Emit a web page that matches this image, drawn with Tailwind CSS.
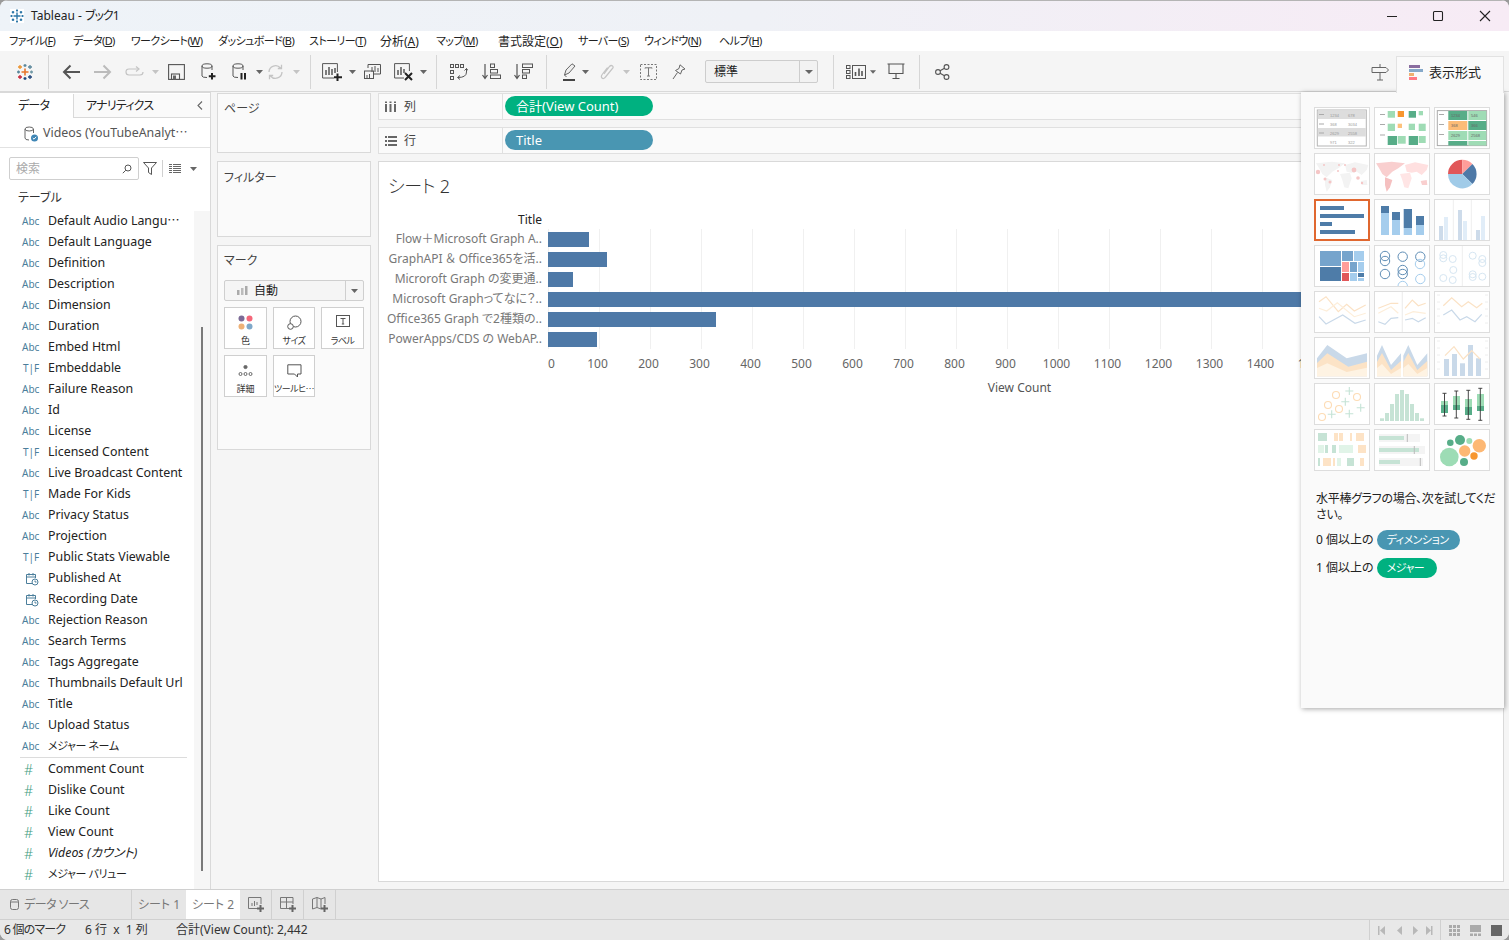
<!DOCTYPE html>
<html lang="ja">
<head>
  <meta charset="UTF-8" />
  <title>Tableau - ブック1</title>
  <script src="https://cdn.jsdelivr.net/npm/@tailwindcss/browser@4"></script>
</head>
<body class="bg-[#9a9a9a] overflow-hidden">
<div class="relative flex flex-col w-[1509px] h-[940px] overflow-hidden rounded-lg bg-[#f5f5f5] text-[#333] font-['Noto_Sans','Noto_Sans_CJK_JP',sans-serif] text-[12px] [font-feature-settings:'palt']">

  <!-- title bar -->
  <div class="flex items-center h-[31px] shrink-0 border-t border-[#b4b4b4] bg-linear-to-r from-[#eef3f8] via-[#eff1f6] to-[#f7ebf5]">
    <svg class="ml-[10px] w-[14px] h-[14px]" viewBox="0 0 14 14" stroke="#2f78a8" stroke-width="1.4"><rect width="14" height="14" fill="#fff" stroke="none"/><path d="M7 3.5V10.5M3.5 7H10.5M7 .5V2.5M6 1.5H8M7 11.5V13.5M6 12.5H8M.5 7H2.5M1.5 6V8M11.5 7H13.5M12.5 6V8M3 2V4.5M1.8 3.2H4.2M11 2V4.5M9.8 3.2H12.2M3 9.5V12M1.8 10.8H4.2M11 9.5V12M9.8 10.8H12.2"/></svg>
    <span class="ml-[7px] text-[#222]">Tableau - <span class="tracking-[-1px]">ブック1</span></span>
    <div class="ml-auto flex items-center">
      <svg class="w-[12px] h-[12px] mr-[34px]" viewBox="0 0 12 12" stroke="#222"><path d="M1 6.5H11"/></svg>
      <svg class="w-[12px] h-[12px] mr-[35px]" viewBox="0 0 12 12" fill="none" stroke="#222" stroke-width="1.1"><rect x="1.5" y="1.5" width="9" height="9" rx="1"/></svg>
      <svg class="w-[12px] h-[12px] mr-[18px]" viewBox="0 0 12 12" stroke="#222" stroke-width="1.1"><path d="M1 1L11 11M11 1L1 11"/></svg>
    </div>
  </div>

  <!-- menu -->
  <div class="flex items-center h-[20px] shrink-0 bg-white pl-[9px] pt-[1px] text-[11px] tracking-[-0.6px] text-[#222] whitespace-nowrap">
    <span class="w-[64px]">ファイル(<u>F</u>)</span><span class="w-[58px]">データ(<u>D</u>)</span><span class="w-[87px]">ワークシート(<u>W</u>)</span><span class="w-[91px]">ダッシュボード(<u>B</u>)</span><span class="w-[71px]">ストーリー(<u>T</u>)</span><span class="w-[56px] text-[12px] tracking-normal">分析(<u>A</u>)</span><span class="w-[62px]">マップ(<u>M</u>)</span><span class="w-[80px] text-[12px] tracking-normal">書式設定(<u>O</u>)</span><span class="w-[66px]">サーバー(<u>S</u>)</span><span class="w-[75px]">ウィンドウ(<u>N</u>)</span><span>ヘルプ(<u>H</u>)</span>
  </div>

  <!-- toolbar -->
  <div class="flex items-center h-[41px] shrink-0 pt-[1px] bg-[#f5f5f5] border-b border-[#d9d9d9]">
    <svg class="ml-[16px] w-[18px] h-[18px]" viewBox="0 0 18 18" fill="none" stroke-width="1.3"><path d="M9 5.5V12.5M5.5 9H12.5" stroke="#e8762c" stroke-width="1.6"/><path d="M9 1V4M7.5 2.5H10.5" stroke="#5b879b"/><path d="M9 14V17M7.5 15.5H10.5" stroke="#1f447a"/><path d="M1 9H4M2.5 7.5V10.5" stroke="#59879b"/><path d="M14 9H17M15.5 7.5V10.5" stroke="#7199a6"/><path d="M4 2V6M2 4H6" stroke="#eb912b"/><path d="M14 2V6M12 4H16" stroke="#5b879b"/><path d="M4 12V16M2 14H6" stroke="#c72035"/><path d="M14 12V16M12 14H16" stroke="#1f447a"/></svg>
    <div class="ml-[14px] w-px h-[34px] bg-[#d6d6d6]"></div>
    <svg class="ml-[13px] w-[18px] h-[16px]" viewBox="0 0 18 16" fill="none" stroke="#555" stroke-width="2"><path d="M18 8H2M8.5 1.5L2 8L8.5 14.5"/></svg>
    <svg class="ml-[14px] w-[18px] h-[16px]" viewBox="0 0 18 16" fill="none" stroke="#bbb" stroke-width="2"><path d="M0 8H16M9.5 1.5L16 8L9.5 14.5"/></svg>
    <svg class="ml-[13px] w-[19px] h-[12px]" viewBox="0 0 19 12" fill="none" stroke="#c4c4c4" stroke-width="1.2"><path d="M13 3H4Q1 3 1 6T4 9H15Q18 9 18 6"/><path d="M11 .5L14 3L11 5.5"/></svg>
    <svg class="ml-[8px] w-[7px] h-[4px]" viewBox="0 0 7 4" fill="#c4c4c4"><path d="M0 0H7L3.5 4Z"/></svg>
    <svg class="ml-[9px] w-[17px] h-[16px]" viewBox="0 0 17 16" fill="none" stroke="#555" stroke-width="1.1"><rect x=".6" y=".6" width="15.8" height="14.8"/><rect x="3.5" y="10" width="8" height="5.5"/><rect x="5" y="11.5" width="3" height="4" fill="#666" stroke="none"/></svg>
    <svg class="ml-[16px] w-[15px] h-[17px]" viewBox="0 0 15 17" fill="none" stroke="#555"><path d="M1 3V13Q1 14.5 6 14.5M11 3V7"/><ellipse cx="6" cy="3" rx="5" ry="2.2"/><path d="M11 10V16.5M7.8 13.2H14.5" stroke="#222" stroke-width="2"/></svg>
    <svg class="ml-[16px] w-[15px] h-[17px]" viewBox="0 0 15 17" fill="none" stroke="#555"><path d="M1 3V13Q1 14.5 6 14.5M11 3V7"/><ellipse cx="6" cy="3" rx="5" ry="2.2"/><path d="M9.5 10V16.5M13 10V16.5" stroke="#222" stroke-width="2"/></svg>
    <svg class="ml-[9px] w-[7px] h-[4px]" viewBox="0 0 7 4" fill="#666"><path d="M0 0H7L3.5 4Z"/></svg>
    <svg class="ml-[4px] w-[17px] h-[16px]" viewBox="0 0 17 16" fill="none" stroke="#c4c4c4" stroke-width="1.3"><path d="M2 8A6.5 6.5 0 0 1 13.5 4M15 8A6.5 6.5 0 0 1 3.5 12M14.5 .8V4.5H10.8M2.5 15.2V11.5H6.2"/></svg>
    <svg class="ml-[9px] w-[7px] h-[4px]" viewBox="0 0 7 4" fill="#c4c4c4"><path d="M0 0H7L3.5 4Z"/></svg>
    <div class="ml-[10px] w-px h-[34px] bg-[#d6d6d6]"></div>
    <svg class="ml-[11px] w-[20px] h-[18px]" viewBox="0 0 20 18" fill="none" stroke="#555"><path d="M12 15H.6V.6H15.4V9"/><path d="M4 12V7M7 12V4M10 12V6M13 10V5" stroke-width="1.5"/><path d="M15.5 10.5V18M12 14.3H20" stroke="#222" stroke-width="2"/></svg>
    <svg class="ml-[7px] w-[7px] h-[4px]" viewBox="0 0 7 4" fill="#666"><path d="M0 0H7L3.5 4Z"/></svg>
    <svg class="ml-[8px] w-[17px] h-[15px]" viewBox="0 0 17 15" fill="none" stroke="#555"><path d="M4 4V.5H16.5V10H10"/><rect x=".5" y="7" width="9" height="7.5" fill="#f5f5f5"/><path d="M8 8V3M11 8V2M14 8V4M3 14V11M5.5 14V10" /></svg>
    <svg class="ml-[13px] w-[19px] h-[18px]" viewBox="0 0 19 18" fill="none" stroke="#555"><path d="M10 15H.6V.6H15.4V8"/><path d="M4 12V7M7 12V4M10 10V6" stroke-width="1.5"/><path d="M11 10L18 17M18 10L11 17" stroke="#222" stroke-width="2"/></svg>
    <svg class="ml-[7px] w-[7px] h-[4px]" viewBox="0 0 7 4" fill="#666"><path d="M0 0H7L3.5 4Z"/></svg>
    <div class="ml-[9px] w-px h-[34px] bg-[#d6d6d6]"></div>
    <svg class="ml-[13px] w-[18px] h-[16px]" viewBox="0 0 18 16" fill="none" stroke="#555"><rect x=".5" y=".5" width="3" height="3"/><rect x="5.5" y=".5" width="3" height="3"/><rect x="10.5" y=".5" width="3" height="3"/><rect x=".5" y="6.5" width="3" height="3"/><rect x=".5" y="12.5" width="3" height="3"/><path d="M16.5 4.5V8Q16.5 13.5 8 13.5M14.5 6.5L16.5 4.5L18 6.5M10 11.5L7.5 13.5L10 15.5"/></svg>
    <svg class="ml-[14px] w-[19px] h-[17px]" viewBox="0 0 19 17" fill="none" stroke="#555"><path d="M3 1V15M.5 12L3 15.5L5.5 12" stroke-width="1.2"/><rect x="8.5" y="1" width="4" height="3.5"/><rect x="8.5" y="6.5" width="7" height="3.5"/><rect x="8.5" y="12" width="10" height="3.5"/></svg>
    <svg class="ml-[13px] w-[19px] h-[17px]" viewBox="0 0 19 17" fill="none" stroke="#555"><path d="M3 1V15M.5 12L3 15.5L5.5 12" stroke-width="1.2"/><rect x="8.5" y="1" width="10" height="3.5"/><rect x="8.5" y="6.5" width="7" height="3.5"/><rect x="8.5" y="12" width="4" height="3.5"/></svg>
    <div class="ml-[13px] w-px h-[34px] bg-[#d6d6d6]"></div>
    <svg class="ml-[16px] w-[13px] h-[18px]" viewBox="0 0 13 18" fill="none" stroke="#666"><path d="M1.5 12L3 7L9 .8L12 3L6 10Z" fill="#eee"/><path d="M1.5 12L3.5 14"/><path d="M0 17H12" stroke="#444" stroke-width="2"/></svg>
    <svg class="ml-[6px] w-[7px] h-[4px]" viewBox="0 0 7 4" fill="#666"><path d="M0 0H7L3.5 4Z"/></svg>
    <svg class="ml-[11px] w-[14px] h-[16px]" viewBox="0 0 14 16" fill="none" stroke="#c4c4c4" stroke-width="1.2"><path d="M4 10L9.5 2.5Q11 .8 12.5 2T12 5L5.5 13Q3.5 15.5 2 14T2.5 10L7.5 3.5"/></svg>
    <svg class="ml-[9px] w-[7px] h-[4px]" viewBox="0 0 7 4" fill="#c4c4c4"><path d="M0 0H7L3.5 4Z"/></svg>
    <svg class="ml-[10px] w-[17px] h-[16px]" viewBox="0 0 17 16" fill="none" stroke="#777"><rect x=".5" y=".5" width="16" height="15" stroke-dasharray="2 1.5"/><path d="M5 4.5V3.8H12V4.5M8.5 3.8V12M7 12H10" /></svg>
    <svg class="ml-[15px] w-[14px] h-[16px]" viewBox="0 0 14 16" fill="none" stroke="#666"><path d="M8 .8L13 5L10 6L8.5 10L3.5 6.5L7 4.5Z"/><path d="M5.5 8.5L1 15"/></svg>
    <div class="ml-[19px] flex items-center w-[113px] h-[23px] rounded-[2px] border border-[#cdcdcd] bg-[#f2f2f2]">
      <span class="flex-1 pl-[8px] text-[#222]">標準</span>
      <span class="flex items-center justify-center w-[18px] h-[21px] border-l border-[#cdcdcd]">
        <svg class="w-[8px] h-[4px]" viewBox="0 0 8 4" fill="#666"><path d="M0 0H8L4 4Z"/></svg>
      </span>
    </div>
    <div class="ml-[15px] w-px h-[34px] bg-[#d6d6d6]"></div>
    <svg class="ml-[12px] w-[20px] h-[14px]" viewBox="0 0 20 14" fill="none" stroke="#555"><rect x=".5" y=".5" width="3.5" height="3"/><rect x=".5" y="5.5" width="3.5" height="3"/><rect x=".5" y="10.5" width="3.5" height="3"/><rect x="6.5" y=".5" width="13" height="13"/><path d="M9.5 11V7M13 11V3.5M16 11V6" stroke-width="1.6"/></svg>
    <svg class="ml-[4px] w-[6px] h-[4px]" viewBox="0 0 7 4" fill="#666"><path d="M0 0H7L3.5 4Z"/></svg>
    <svg class="ml-[11px] w-[18px] h-[17px]" viewBox="0 0 18 17" fill="none" stroke="#555" stroke-width="1.1"><path d="M.5 1H17.5M2 1V10.5H16V1M9 10.5V15.5M5.5 15.5H12.5"/></svg>
    <div class="ml-[14px] w-px h-[34px] bg-[#d6d6d6]"></div>
    <svg class="ml-[15px] w-[15px] h-[16px]" viewBox="0 0 15 16" fill="none" stroke="#555" stroke-width="1.1"><circle cx="3" cy="8" r="2.4"/><circle cx="11.5" cy="3" r="2.4"/><circle cx="11.5" cy="13" r="2.4"/><path d="M5 6.8L9.5 4.2M5 9.2L9.5 11.8"/></svg>
    <svg class="ml-[421px] w-[18px] h-[18px]" viewBox="0 0 18 18" fill="none" stroke="#666"><path d="M1 4.5H15L17.5 7L15 9.5H1ZM9 1V4.5M9 9.5V17M6 17H12"/></svg>
  </div>

  <!-- main -->
  <div class="flex flex-1 min-h-0">

    <!-- data pane -->
    <div class="flex flex-col w-[211px] shrink-0 bg-white border-r border-[#d9d9d9] overflow-hidden">
      <div class="flex h-[26px] shrink-0 border-t border-[#d9d9d9] pt-[1px]">
        <div class="flex items-center w-[73px] pl-[18px] text-[12px] tracking-[-0.8px] text-[#222]">データ</div>
        <div class="flex flex-1 items-center justify-between px-[7px] pl-[12px] text-[12px] tracking-[-0.8px] text-[#222] bg-[#fafafa] border-l border-b border-[#d9d9d9]">
          アナリティクス
          <svg class="w-[6px] h-[9px]" viewBox="0 0 6 9" fill="none" stroke="#666" stroke-width="1.1"><path d="M5 .5L1 4.5L5 8.5"/></svg>
        </div>
      </div>
      <div class="flex items-center h-[30px] shrink-0 pl-[24px] pt-[2px] text-[#555] text-[12.4px] border-b border-[#e2e2e2]">
        <svg class="w-[14px] h-[16px] shrink-0" viewBox="0 0 14 16" fill="none" stroke="#666"><path d="M1 3V12Q1 14 5 14M9.5 3V7"/><ellipse cx="5.2" cy="3" rx="4.2" ry="2"/><circle cx="10.5" cy="12" r="3.5" fill="#3f86b5" stroke="none"/><path d="M8.8 12L10 13.2L12.2 10.8" stroke="#fff"/></svg>
        <span class="ml-[5px] whitespace-nowrap">Videos (YouTubeAnalyt⋯</span>
      </div>
      <div class="flex items-center h-[38px] shrink-0 pl-[9px] pt-[3px]">
        <div class="flex items-center justify-between w-[130px] h-[23px] px-[6px] rounded-[2px] border border-[#cfcfcf] text-[#aaa]">
          検索
          <svg class="w-[10px] h-[10px]" viewBox="0 0 10 10" fill="none" stroke="#555"><circle cx="6" cy="4" r="3"/><path d="M3.8 6.2L.8 9.2"/></svg>
        </div>
        <svg class="ml-[4px] w-[14px] h-[13px]" viewBox="0 0 14 13" fill="none" stroke="#555"><path d="M.5 .5H13.5L8.5 6V12.5L5.5 10.5V6Z"/></svg>
        <div class="ml-[5px] w-px h-[17px] bg-[#d0d0d0]"></div>
        <svg class="ml-[6px] w-[12px] h-[9px]" viewBox="0 0 12 9" stroke="#666"><path d="M0 .5H3M4 .5H12M0 2.5H3M4 2.5H12M0 4.5H3M4 4.5H12M0 6.5H3M4 6.5H12M0 8.5H3M4 8.5H12"/></svg>
        <svg class="ml-[9px] w-[7px] h-[4px]" viewBox="0 0 7 4" fill="#666"><path d="M0 0H7L3.5 4Z"/></svg>
      </div>
      <div class="flex items-center h-[25px] shrink-0 pb-[1px] pl-[18px] text-[12px] text-[#333]">テーブル</div>

      <div class="flex flex-1 min-h-0">
        <div class="w-[194px] shrink-0 text-[12.4px] text-[#222] whitespace-nowrap">
          <div class="flex items-center h-[21px]"><span class="w-[48px] pl-[22px] text-[10px] text-[#4b7e9b]">Abc</span>Default Audio Langu⋯</div>
          <div class="flex items-center h-[21px]"><span class="w-[48px] pl-[22px] text-[10px] text-[#4b7e9b]">Abc</span>Default Language</div>
          <div class="flex items-center h-[21px]"><span class="w-[48px] pl-[22px] text-[10px] text-[#4b7e9b]">Abc</span>Definition</div>
          <div class="flex items-center h-[21px]"><span class="w-[48px] pl-[22px] text-[10px] text-[#4b7e9b]">Abc</span>Description</div>
          <div class="flex items-center h-[21px]"><span class="w-[48px] pl-[22px] text-[10px] text-[#4b7e9b]">Abc</span>Dimension</div>
          <div class="flex items-center h-[21px]"><span class="w-[48px] pl-[22px] text-[10px] text-[#4b7e9b]">Abc</span>Duration</div>
          <div class="flex items-center h-[21px]"><span class="w-[48px] pl-[22px] text-[10px] text-[#4b7e9b]">Abc</span>Embed Html</div>
          <div class="flex items-center h-[21px]"><span class="w-[48px] pl-[23px] text-[10px] text-[#4b7e9b]">T|F</span>Embeddable</div>
          <div class="flex items-center h-[21px]"><span class="w-[48px] pl-[22px] text-[10px] text-[#4b7e9b]">Abc</span>Failure Reason</div>
          <div class="flex items-center h-[21px]"><span class="w-[48px] pl-[22px] text-[10px] text-[#4b7e9b]">Abc</span>Id</div>
          <div class="flex items-center h-[21px]"><span class="w-[48px] pl-[22px] text-[10px] text-[#4b7e9b]">Abc</span>License</div>
          <div class="flex items-center h-[21px]"><span class="w-[48px] pl-[23px] text-[10px] text-[#4b7e9b]">T|F</span>Licensed Content</div>
          <div class="flex items-center h-[21px]"><span class="w-[48px] pl-[22px] text-[10px] text-[#4b7e9b]">Abc</span>Live Broadcast Content</div>
          <div class="flex items-center h-[21px]"><span class="w-[48px] pl-[23px] text-[10px] text-[#4b7e9b]">T|F</span>Made For Kids</div>
          <div class="flex items-center h-[21px]"><span class="w-[48px] pl-[22px] text-[10px] text-[#4b7e9b]">Abc</span>Privacy Status</div>
          <div class="flex items-center h-[21px]"><span class="w-[48px] pl-[22px] text-[10px] text-[#4b7e9b]">Abc</span>Projection</div>
          <div class="flex items-center h-[21px]"><span class="w-[48px] pl-[23px] text-[10px] text-[#4b7e9b]">T|F</span>Public Stats Viewable</div>
          <div class="flex items-center h-[21px]"><span class="w-[48px] pl-[25px]"><svg class="w-[14px] h-[14px]" viewBox="0 0 14 14" fill="none" stroke="#4b7e9b"><path d="M7 11.5H1.5V2.5H10.5V6M1.5 5H10.5M4 1V3.5M8 1V3.5"/><circle cx="10" cy="10" r="3"/><path d="M10 8.5V10H11.5"/></svg></span>Published At</div>
          <div class="flex items-center h-[21px]"><span class="w-[48px] pl-[25px]"><svg class="w-[14px] h-[14px]" viewBox="0 0 14 14" fill="none" stroke="#4b7e9b"><path d="M7 11.5H1.5V2.5H10.5V6M1.5 5H10.5M4 1V3.5M8 1V3.5"/><circle cx="10" cy="10" r="3"/><path d="M10 8.5V10H11.5"/></svg></span>Recording Date</div>
          <div class="flex items-center h-[21px]"><span class="w-[48px] pl-[22px] text-[10px] text-[#4b7e9b]">Abc</span>Rejection Reason</div>
          <div class="flex items-center h-[21px]"><span class="w-[48px] pl-[22px] text-[10px] text-[#4b7e9b]">Abc</span>Search Terms</div>
          <div class="flex items-center h-[21px]"><span class="w-[48px] pl-[22px] text-[10px] text-[#4b7e9b]">Abc</span>Tags Aggregate</div>
          <div class="flex items-center h-[21px]"><span class="w-[48px] pl-[22px] text-[10px] text-[#4b7e9b]">Abc</span>Thumbnails Default Url</div>
          <div class="flex items-center h-[21px]"><span class="w-[48px] pl-[22px] text-[10px] text-[#4b7e9b]">Abc</span>Title</div>
          <div class="flex items-center h-[21px]"><span class="w-[48px] pl-[22px] text-[10px] text-[#4b7e9b]">Abc</span>Upload Status</div>
          <div class="flex items-center h-[21px] text-[11px] tracking-[-0.4px]"><span class="w-[48px] pl-[22px] text-[10px] tracking-normal text-[#4b7e9b]">Abc</span>メジャー ネーム</div>
          <div class="h-[2px] ml-[20px] mr-[7px] border-t border-[#dcdcdc]"></div>
          <div class="flex items-center h-[21px]"><span class="w-[48px] pl-[24px] text-[14px] font-light leading-none text-[#3f9d7f]">#</span>Comment Count</div>
          <div class="flex items-center h-[21px]"><span class="w-[48px] pl-[24px] text-[14px] font-light leading-none text-[#3f9d7f]">#</span>Dislike Count</div>
          <div class="flex items-center h-[21px]"><span class="w-[48px] pl-[24px] text-[14px] font-light leading-none text-[#3f9d7f]">#</span>Like Count</div>
          <div class="flex items-center h-[21px]"><span class="w-[48px] pl-[24px] text-[14px] font-light leading-none text-[#3f9d7f]">#</span>View Count</div>
          <div class="flex items-center h-[21px] italic"><span class="w-[48px] pl-[24px] text-[14px] font-light leading-none not-italic text-[#3f9d7f]">#</span>Videos (カウント)</div>
          <div class="flex items-center h-[21px] text-[11px] tracking-[-0.4px]"><span class="w-[48px] pl-[24px] text-[14px] font-light leading-none tracking-normal text-[#3f9d7f]">#</span>メジャー バリュー</div>
        </div>
        <!-- scrollbar -->
        <div class="flex-1 pt-[116px] pb-[18px] pl-[7px] bg-[#f6f6f6]">
          <div class="w-[2px] h-full bg-[#7a7a7a]"></div>
        </div>
      </div>
    </div>

    <!-- shelves column -->
    <div class="flex flex-col w-[154px] shrink-0 ml-[6px] pt-[1px]">
      <div class="h-[60px] shrink-0 pl-[6px] pt-[6px] bg-[#fafafa] border border-[#d9d9d9] text-[#444]">ページ</div>
      <div class="h-[76px] shrink-0 mt-[8px] pl-[6px] pt-[7px] bg-[#fafafa] border border-[#d9d9d9] text-[#444]">フィルター</div>
      <div class="h-[205px] shrink-0 mt-[8px] px-[6px] pt-[6px] bg-[#fafafa] border border-[#d9d9d9] text-[#444]">
        マーク
        <div class="flex items-center h-[21px] mt-[10px] w-[140px] rounded-[2px] border border-[#cfcfcf] bg-[#f5f5f5]">
          <svg class="ml-[12px] w-[11px] h-[9px]" viewBox="0 0 11 9" fill="#aaa"><rect y="4" width="2.5" height="5"/><rect x="4" y="2" width="2.5" height="7" fill="#bbb"/><rect x="8" width="2.5" height="9"/></svg>
          <span class="ml-[6px] flex-1 text-[#222]">自動</span>
          <span class="flex items-center justify-center w-[18px] h-[19px] border-l border-[#cfcfcf]"><svg class="w-[7px] h-[4px]" viewBox="0 0 7 4" fill="#666"><path d="M0 0H7L3.5 4Z"/></svg></span>
        </div>
        <div class="grid grid-cols-[43px_42px_43px] gap-x-[6px] gap-y-[6px] mt-[6px] text-[9px] text-[#333]">
          <div class="flex flex-col items-center h-[42px] bg-white border border-[#cfcfcf] pt-[7px]">
            <svg class="w-[15px] h-[15px]" viewBox="0 0 15 15"><circle cx="3.5" cy="3.5" r="3" fill="#7c6a96"/><circle cx="11.5" cy="3.5" r="3" fill="#f5677a"/><circle cx="3.5" cy="11.5" r="3" fill="#eeb177"/><circle cx="11.5" cy="11.5" r="3" fill="#7fa8c9"/></svg>
            <span class="mt-[4px]">色</span>
          </div>
          <div class="flex flex-col items-center h-[42px] bg-white border border-[#cfcfcf] pt-[7px]">
            <svg class="w-[15px] h-[15px]" viewBox="0 0 15 15" fill="none" stroke="#555"><circle cx="8.5" cy="6.5" r="5.5"/><circle cx="3.5" cy="11.5" r="2.8" fill="#fff"/></svg>
            <span class="mt-[4px] tracking-[-0.5px]">サイズ</span>
          </div>
          <div class="flex flex-col items-center h-[42px] bg-white border border-[#cfcfcf] pt-[7px]">
            <svg class="w-[14px] h-[14px]" viewBox="0 0 14 14" fill="none" stroke="#555"><rect x=".5" y=".5" width="13" height="11"/><path d="M4.5 3.5H9.5M7 3.5V9M5.8 9H8.2"/></svg>
            <span class="mt-[5px] tracking-[-0.5px]">ラベル</span>
          </div>
          <div class="flex flex-col items-center h-[42px] bg-white border border-[#cfcfcf] pt-[9px]">
            <svg class="w-[15px] h-[12px]" viewBox="0 0 15 12" fill="none" stroke="#666"><circle cx="7.5" cy="2" r="1.6" fill="#666"/><circle cx="2.5" cy="9" r="1.5"/><circle cx="7.5" cy="9" r="1.5"/><circle cx="12.5" cy="9" r="1.5"/></svg>
            <span class="mt-[5px]">詳細</span>
          </div>
          <div class="flex flex-col items-center h-[42px] bg-white border border-[#cfcfcf] pt-[8px]">
            <svg class="w-[15px] h-[14px]" viewBox="0 0 15 14" fill="none" stroke="#555"><path d="M.8 .8H14V10H10.5V13L7.5 10H.8Z"/></svg>
            <span class="mt-[4px] whitespace-nowrap tracking-[-0.5px]">ツールヒ⋯</span>
          </div>
        </div>
      </div>
    </div>

    <!-- right side: column/row shelves and view -->
    <div class="flex flex-col flex-1 min-w-0 ml-[7px] mr-[5px] pt-[1px]">
      <div class="flex h-[27px] shrink-0 bg-[#fafafa] border border-[#e0e0e0]">
        <div class="flex items-center w-[124px] pl-[6px] border-r border-[#e0e0e0] text-[#444]">
          <svg class="w-[11px] h-[11px]" viewBox="0 0 11 11" fill="#666"><rect y="3" width="2" height="8"/><rect x="4.5" y="3" width="2" height="8"/><rect x="9" y="3" width="2" height="8"/><rect y=".5" width="2" height="1.5"/><rect x="4.5" y=".5" width="2" height="1.5"/><rect x="9" y=".5" width="2" height="1.5"/></svg>
          <span class="ml-[8px]">列</span>
        </div>
        <div class="ml-[2px] mt-[2px] flex items-center w-[148px] h-[20px] pl-[11px] pt-[1px] rounded-full bg-[#00b180] text-[13px] text-white">合計(View Count)</div>
      </div>
      <div class="flex h-[27px] shrink-0 mt-[7px] bg-[#fafafa] border border-[#e0e0e0]">
        <div class="flex items-center w-[124px] pl-[6px] border-r border-[#e0e0e0] text-[#444]">
          <svg class="w-[12px] h-[10px]" viewBox="0 0 12 10" fill="#666"><rect width="2" height="2"/><rect x="3" width="9" height="2"/><rect y="4" width="2" height="2"/><rect x="3" y="4" width="9" height="2"/><rect y="8" width="2" height="2"/><rect x="3" y="8" width="9" height="2"/></svg>
          <span class="ml-[7px]">行</span>
        </div>
        <div class="ml-[2px] mt-[2px] flex items-center w-[148px] h-[20px] pl-[11px] pt-[1px] rounded-full bg-[#4996b2] text-[13px] text-white">Title</div>
      </div>

      <!-- view -->
      <div class="flex-1 mt-[7px] mb-[7px] bg-white border border-[#d9d9d9] overflow-hidden">
        <div class="pl-[9px] pt-[11px] h-[48px] text-[18px] tracking-[-0.3px] font-light leading-[26px] text-[#333]">シート 2</div>
        <div class="w-[163px] h-[19px] pt-[1px] text-right text-[12px] text-[#222]">Title</div>
        <div class="flex">
          <div class="w-[163px] shrink-0 text-right text-[12px] text-[#787878] whitespace-nowrap">
            <div class="flex items-center justify-end h-[20px]">Flow＋Microsoft Graph A..</div>
            <div class="flex items-center justify-end h-[20px]">GraphAPI ＆ Office365を活..</div>
            <div class="flex items-center justify-end h-[20px]">Microroft Graph の変更通..</div>
            <div class="flex items-center justify-end h-[20px]">Microsoft Graphってなに？..</div>
            <div class="flex items-center justify-end h-[20px]">Office365 Graph で2種類の..</div>
            <div class="flex items-center justify-end h-[20px]">PowerApps/CDS の WebAP..</div>
          </div>
          <div class="flex-1 ml-[6px] bg-[repeating-linear-gradient(to_right,#f0f0f0_0,#f0f0f0_1px,transparent_1px,transparent_51px)]">
            <div class="flex items-center h-[20px]"><div class="w-[41px] h-[15px] bg-[#4e79a7]"></div></div>
            <div class="flex items-center h-[20px]"><div class="w-[59px] h-[15px] bg-[#4e79a7]"></div></div>
            <div class="flex items-center h-[20px]"><div class="w-[25px] h-[15px] bg-[#4e79a7]"></div></div>
            <div class="flex items-center h-[20px]"><div class="w-[780px] h-[15px] bg-[#4e79a7]"></div></div>
            <div class="flex items-center h-[20px]"><div class="w-[168px] h-[15px] bg-[#4e79a7]"></div></div>
            <div class="flex items-center h-[20px]"><div class="w-[49px] h-[15px] bg-[#4e79a7]"></div></div>
          </div>
        </div>
        <div class="flex ml-[142px] mt-[6px] text-[12px] text-[#666]">
          <span class="w-[51px] text-center translate-x-[5px]">0</span><span class="w-[51px] text-center">100</span><span class="w-[51px] text-center">200</span><span class="w-[51px] text-center">300</span><span class="w-[51px] text-center">400</span><span class="w-[51px] text-center">500</span><span class="w-[51px] text-center">600</span><span class="w-[51px] text-center">700</span><span class="w-[51px] text-center">800</span><span class="w-[51px] text-center">900</span><span class="w-[51px] text-center">1000</span><span class="w-[51px] text-center">1100</span><span class="w-[51px] text-center">1200</span><span class="w-[51px] text-center">1300</span><span class="w-[51px] text-center">1400</span><span class="w-[51px] text-center">1500</span>
        </div>
        <div class="w-[1281px] mt-[6px] text-center text-[12px] text-[#555]">View Count</div>
      </div>
    </div>
  </div>

  <!-- sheet tabs -->
  <div class="flex h-[30px] shrink-0 bg-[#e6e6e6] border-t border-[#d0d0d0] text-[#777]">
    <div class="flex items-center w-[132px] pl-[10px] border-r border-[#d0d0d0]">
      <svg class="w-[9px] h-[11px]" viewBox="0 0 9 11" fill="none" stroke="#777"><rect x=".5" y=".5" width="8" height="10" rx="2"/><path d="M.5 3H8.5"/></svg>
      <span class="ml-[5px] tracking-[-0.5px]">データ ソース</span>
    </div>
    <div class="flex items-center justify-center w-[54px]">シート 1</div>
    <div class="flex items-center justify-center w-[54px] bg-white">シート 2</div>
    <div class="flex items-center justify-center w-[32px] border-r border-[#d0d0d0]">
      <svg class="w-[16px] h-[15px]" viewBox="0 0 16 15" fill="none" stroke="#777"><path d="M9 11.5H.5V.5H13V7"/><path d="M4 9V6M6.5 9V4M9 8V5"/><path d="M12.5 8V15M9 11.5H16" stroke="#666" stroke-width="2"/></svg>
    </div>
    <div class="flex items-center justify-center w-[32px] border-r border-[#d0d0d0]">
      <svg class="w-[16px] h-[15px]" viewBox="0 0 16 15" fill="none" stroke="#777"><path d="M9 11.5H.5V.5H13V7M.5 5H13M6.5 .5V11.5"/><path d="M12.5 8V15M9 11.5H16" stroke="#666" stroke-width="2"/></svg>
    </div>
    <div class="flex items-center justify-center w-[32px] border-r border-[#d0d0d0]">
      <svg class="w-[16px] h-[15px]" viewBox="0 0 16 15" fill="none" stroke="#777"><path d="M9 12L5 10.5L.5 12V2L5 .5L9 2L13 .5V7M5 .5V10.5M9 2V12"/><path d="M12.5 8V15M9 11.5H16" stroke="#666" stroke-width="2"/></svg>
    </div>
  </div>

  <!-- status bar -->
  <div class="flex items-center h-[21px] shrink-0 bg-[#e8e8e8] border-t border-[#d0d0d0] pl-[4px] text-[#333] whitespace-nowrap">
    <span class="w-[81px] tracking-[-0.8px]">6 個のマーク</span>
    <span class="w-[91px] whitespace-pre">6 行  x  1 列</span>
    <span>合計(View Count): 2,442</span>
    <div class="ml-auto flex items-center h-full border-l border-[#d0d0d0]">
      <svg class="ml-[8px] w-[55px] h-[9px]" viewBox="0 0 55 9" fill="#b8b8b8"><rect y="0" width="1.5" height="9"/><path d="M7 0V9L2 4.5Z"/><path d="M24 0V9L19 4.5Z"/><path d="M35 0V9L40 4.5Z"/><path d="M48 0V9L53 4.5Z"/><rect x="53" y="0" width="1.5" height="9"/></svg>
      <div class="ml-[7px] w-px h-full bg-[#d0d0d0]"></div>
      <svg class="ml-[8px] w-[11px] h-[11px]" viewBox="0 0 11 11" fill="#aaa"><rect width="3" height="3"/><rect x="4" width="3" height="3"/><rect x="8" width="3" height="3"/><rect y="4" width="3" height="3"/><rect x="4" y="4" width="3" height="3"/><rect x="8" y="4" width="3" height="3"/><rect y="8" width="3" height="3"/><rect x="4" y="8" width="3" height="3"/><rect x="8" y="8" width="3" height="3"/></svg>
      <svg class="ml-[10px] w-[11px] h-[11px]" viewBox="0 0 11 11" fill="#aaa"><rect width="11" height="7"/><rect y="8.5" width="3" height="2.5"/><rect x="4" y="8.5" width="3" height="2.5"/><rect x="8" y="8.5" width="3" height="2.5"/></svg>
      <div class="ml-[10px] mr-[7px] w-[11px] h-[11px] bg-[#666]"></div>
    </div>
  </div>

  <!-- show me tab and panel, floating over the view -->
  <div class="absolute left-[1396px] top-[56px] flex items-center w-[108px] h-[37px] pl-[12px] pb-[4px] bg-[#fafafa] border border-b-0 border-[#e2e2e2] z-10 text-[13px] text-[#222]">
    <svg class="w-[14px] h-[16px]" viewBox="0 0 14 16"><rect width="11" height="3" fill="#8a6d9f"/><rect y="4" width="14" height="3" fill="#86a9c9"/><rect y="8" width="5" height="3" fill="#eeb070"/><rect y="12" width="8" height="3" fill="#ff7a85"/></svg>
    <span class="ml-[6px]">表示形式</span>
  </div>
  <div class="absolute left-[1301px] top-[92px] w-[203px] h-[616px] pl-[13px] pt-[15px] bg-[#fafafa] shadow-[1px_1px_5px_rgba(0,0,0,0.35)]">
    <div class="grid grid-cols-[56px_56px_56px] auto-rows-[42px] gap-[4px]">
      <!-- text table -->
      <svg class="border border-[#ddd] bg-white" viewBox="1 1 54 40" font-family="Liberation Sans" font-size="4" fill="#999"><rect x="3.3" y="3" width="49" height="36" fill="#fff" stroke="#b5b5b5"/><rect x="3.8" y="3.5" width="48" height="8.5" fill="#ddd"/><rect x="3.8" y="21" width="48" height="8.5" fill="#ddd"/><path d="M5 7.5H10M5 17H10M5 26H10" stroke="#aaa" stroke-width="1.2"/><text x="16" y="9.5">1234</text><text x="34" y="9.5">678</text><text x="16" y="18.5">368</text><text x="34" y="18.5">3034</text><text x="16" y="27.5">2629</text><text x="34" y="27.5">2558</text><text x="16" y="36.5">971</text><text x="34" y="36.5">322</text></svg>
      <!-- heat map -->
      <svg class="border border-[#ddd] bg-white" viewBox="1 1 54 40"><path d="M6 7.5H11M6 17.5H11M6 28H11" stroke="#aaa" stroke-width="1.2"/><rect x="13.7" y="4" width="7.3" height="6.7" fill="#9fdcb5"/><rect x="23.7" y="4" width="6.3" height="6" fill="#f7962f"/><rect x="34.7" y="4" width="7.3" height="6.7" fill="#57ad88"/><rect x="44.7" y="4" width="4.3" height="4.3" fill="#9fdcb5"/><rect x="13.7" y="16.7" width="7.3" height="7.3" fill="#9fdcb5"/><rect x="23.7" y="16.7" width="4.3" height="4.3" fill="#fcc27c"/><rect x="34.7" y="16.7" width="6.3" height="6.3" fill="#9fdcb5"/><rect x="44.7" y="16.7" width="7" height="7.3" fill="#9fdcb5"/><rect x="13.7" y="29" width="9.3" height="9" fill="#57ad88"/><rect x="23.7" y="29" width="8" height="7.7" fill="#9fdcb5"/><rect x="34.7" y="29" width="9.3" height="9" fill="#57ad88"/><rect x="44.7" y="29" width="7" height="7" fill="#9fdcb5"/></svg>
      <!-- highlight table -->
      <svg class="border border-[#ddd] bg-white" viewBox="1 1 54 40" font-family="Liberation Sans" font-size="4" fill="#666"><rect x="3.3" y="3.6" width="49.3" height="35" fill="#fff" stroke="#aaa"/><path d="M5 7.5H10M5 17.5H10M5 27.5H10" stroke="#aaa" stroke-width="1.2"/><rect x="14.3" y="4" width="19" height="9" fill="#57ad88"/><rect x="34.3" y="4" width="18" height="9" fill="#9fdcb5"/><rect x="14.3" y="14" width="19" height="9" fill="#fcbc77"/><rect x="34.3" y="14" width="18" height="9" fill="#57ad88"/><rect x="14.3" y="24" width="19" height="9" fill="#9fdcb5"/><rect x="34.3" y="24" width="18" height="9" fill="#9fdcb5"/><rect x="14.3" y="34" width="19" height="4.5" fill="#57ad88"/><rect x="34.3" y="34" width="18" height="4.5" fill="#9fdcb5"/><text x="17" y="10">1234</text><text x="37" y="10">546</text><text x="17" y="20">368</text><text x="37" y="20">366</text><text x="17" y="30">2629</text><text x="37" y="30">2568</text></svg>
      <!-- symbol map -->
      <svg class="border border-[#ddd] bg-white" viewBox="1 1 54 40"><g fill="#f3f3f3"><path d="M2 10.3L17.7 8.7L31 10.3L24.3 15.3L18.3 18.7L12.7 24.3L8.3 21L5 15Z"/><path d="M11 24.3L18.3 27L16 34.3L12.7 38.7L11 32Z"/><path d="M31 12L41 9.3L54.3 12L52.7 17L47.7 22L42.7 18.7L37.7 19.7L32.7 18.7Z"/><path d="M26 21L36 19.7L37.7 25.3L34.3 35.3L30.3 34.3L28.3 27Z"/><path d="M46.7 28L52.7 27L53.3 32L48 32Z"/></g><g fill="#f5c6c6"><circle cx="4" cy="19" r="2.2"/><circle cx="10" cy="12" r="1"/><circle cx="11" cy="26" r="1.5"/><circle cx="16" cy="29" r="1.5"/><circle cx="25" cy="12" r="1"/><circle cx="31" cy="12" r="1"/><circle cx="40" cy="17" r="2.4"/><circle cx="44" cy="25" r="1.8"/><circle cx="48" cy="30" r="1.2"/><circle cx="24" cy="18" r="1"/></g></svg>
      <!-- filled map -->
      <svg class="border border-[#ddd] bg-white" viewBox="1 1 54 40"><path d="M2 10.3L17.7 8.7L31 10.3L24.3 15.3L18.3 18.7L12.7 24.3L8.3 21L5 15Z" fill="#f9cfcf"/><path d="M11 24.3L18.3 27L16 34.3L12.7 38.7L11 32Z" fill="#f5c0c0"/><path d="M31 12L41 9.3L54.3 12L52.7 17L47.7 22L42.7 18.7L37.7 19.7L32.7 18.7Z" fill="#ffe0e0"/><path d="M26 21L36 19.7L37.7 25.3L34.3 35.3L30.3 34.3L28.3 27Z" fill="#ffe5e5"/><path d="M46.7 28L52.7 27L53.3 32L48 32Z" fill="#f9cfcf"/></svg>
      <!-- pie -->
      <svg class="border border-[#ddd] bg-white" viewBox="1 1 54 40"><path d="M28.3 21L14 21A14.3 14.3 0 0 1 28.3 6.7Z" fill="#e15759"/><path d="M28.3 21V6.7A14.3 14.3 0 0 1 38.4 10.9Z" fill="#ff9d9a"/><path d="M28.3 21L38.4 10.9A14.3 14.3 0 0 1 38.4 31.1Z" fill="#4e79a7"/><path d="M28.3 21L38.4 31.1A14.3 14.3 0 0 1 14 21Z" fill="#a0cbe8"/></svg>
      <!-- bars (selected) -->
      <svg class="border-2 border-[#e0672f] bg-white" viewBox="0 0 52 38" fill="#4e7ca8"><rect x="4" y="5" width="24" height="4"/><rect x="4" y="13" width="44" height="4"/><rect x="4" y="21" width="12" height="4"/><rect x="4" y="29" width="35" height="4"/></svg>
      <!-- stacked bars -->
      <svg class="border border-[#ddd] bg-white" viewBox="1 1 54 40"><g fill="#4e7ca8"><rect x="7" y="7" width="8" height="7"/><rect x="18" y="13" width="8" height="8"/><rect x="29.7" y="10" width="8.3" height="19"/><rect x="42" y="17" width="8" height="9"/></g><g fill="#a5cded"><rect x="7" y="14" width="8" height="22"/><rect x="18" y="21" width="8" height="15"/><rect x="29.7" y="29" width="8.3" height="7"/><rect x="42" y="26" width="8" height="10"/></g></svg>
      <!-- side by side -->
      <svg class="border border-[#ddd] bg-white" viewBox="1 1 54 40"><path d="M19.3 0V42M37.3 0V42" stroke="#eee"/><g fill="#cddbea"><rect x="5" y="27" width="4" height="14"/><rect x="24" y="11" width="4" height="30"/><rect x="42" y="31" width="4" height="10"/></g><g fill="#e1edf8"><rect x="10" y="18" width="4" height="23"/><rect x="29" y="22" width="4" height="19"/><rect x="47" y="17" width="4" height="24"/></g></svg>
      <!-- treemap -->
      <svg class="border border-[#ddd] bg-white" viewBox="1 1 54 40"><rect x="6" y="6" width="21" height="15" fill="#76a4cc"/><rect x="6" y="22" width="21" height="14" fill="#4e7ca8"/><rect x="28" y="6" width="11" height="10" fill="#76a4cc"/><rect x="40" y="6" width="10" height="10" fill="#a5cded"/><rect x="28" y="17" width="7" height="10" fill="#ff9d9a"/><rect x="36" y="17" width="7" height="10" fill="#76a4cc"/><rect x="44" y="17" width="6" height="10" fill="#a5cded"/><rect x="28" y="28" width="7" height="8" fill="#e15759"/><rect x="36" y="28" width="7" height="8" fill="#a5cded"/><rect x="44" y="28" width="6" height="4" fill="#4e7ca8"/><rect x="44" y="33" width="6" height="3" fill="#a5cded"/></svg>
      <!-- circle views -->
      <svg class="border border-[#ddd] bg-white" viewBox="1 1 54 40" fill="none" stroke-width="1"><g stroke="#5f8db5"><circle cx="11" cy="11" r="4.7"/><circle cx="11" cy="16" r="4.7"/><circle cx="28.7" cy="11.7" r="4.7"/><circle cx="46.3" cy="11.7" r="4.7"/><circle cx="11" cy="29" r="4.7"/><circle cx="28.7" cy="25" r="4.7"/><circle cx="28.7" cy="29" r="4.7"/></g><g stroke="#a5cded"><circle cx="46" cy="19" r="4.7"/><circle cx="46.3" cy="34" r="4.7"/><circle cx="28.7" cy="41" r="4.7"/></g></svg>
      <!-- side by side circles -->
      <svg class="border border-[#ddd] bg-white" viewBox="1 1 54 40" fill="none" stroke="#d6e6f2"><path d="M28.3 0V42" stroke="#eee"/><circle cx="9.3" cy="10" r="3.5"/><circle cx="9.3" cy="13.3" r="3.5"/><circle cx="18.7" cy="14" r="3.5"/><circle cx="19.3" cy="25" r="3.5"/><circle cx="9.3" cy="33" r="3.5"/><circle cx="18.7" cy="35" r="3.5"/><circle cx="38.7" cy="10.7" r="3.5"/><circle cx="48.3" cy="14" r="3.5"/><circle cx="48.3" cy="18" r="3.5"/><circle cx="38.7" cy="29.3" r="3.5"/><circle cx="38.7" cy="32" r="3.5"/><circle cx="48.3" cy="31.7" r="3.5"/></svg>
      <!-- lines continuous -->
      <svg class="border border-[#ddd] bg-white" viewBox="1 1 54 40" fill="none" stroke-width="1.2"><polyline stroke="#fbe2c5" points="5,10.7 12,5.7 24.3,20.7 32.7,13.3 40.3,20 51.7,14"/><polyline stroke="#fdeeda" points="5,17.3 12.7,20 23.3,11.7 40.3,25.7 51.7,22.3"/><polyline stroke="#c9d9e9" points="5,25.7 12,33 28.7,24 41,32.3 51.7,29"/></svg>
      <!-- lines discrete -->
      <svg class="border border-[#ddd] bg-white" viewBox="1 1 54 40" fill="none" stroke-width="1.2"><path d="M28.3 0V42" stroke="#eee"/><polyline stroke="#fbe2c5" points="4.3,17.3 17,12.3 24.3,12.3"/><polyline stroke="#fdeeda" points="4.3,22.3 17,15.7 24.3,22.3"/><polyline stroke="#c9d9e9" points="4.3,30.7 11,33.3 17,27.3 24.3,26.7"/><polyline stroke="#fbe2c5" points="31,17.3 38.3,9 44.3,14.7 51.7,12.3"/><polyline stroke="#fdeeda" points="31,24 39.3,20.7 51.7,22.3"/><polyline stroke="#c9d9e9" points="31,29 38.3,27.3 44.3,30.7 51.7,26.7"/></svg>
      <!-- dual lines -->
      <svg class="border border-[#ddd] bg-white" viewBox="1 1 54 40" fill="none" stroke-width="1.2"><path d="M3 4H6M3 11H6M3 18H6M3 25H6M3 32H6M51 4H54M51 11H54M51 18H54M51 25H54M51 32H54" stroke="#eee" stroke-width="1"/><polyline stroke="#fbe2c5" points="9.3,14.7 17.7,6.7 27.7,15.7 34.3,10.7 42.7,16.7 48.3,12.3"/><polyline stroke="#c9d9e9" points="9.3,24 17.7,19 26,29 32.7,25.7 41,30.7 47.7,23.3"/></svg>
      <!-- area continuous -->
      <svg class="border border-[#ddd] bg-white" viewBox="1 1 54 40"><path d="M3 21.3L13.3 8L32.7 21.3L53 16.3V39.3H3Z" fill="#c9d9e9"/><path d="M3 26L13.3 16.3L34.3 29.7L53 24.7V39.3H3Z" fill="#fce3c6"/><path d="M3 31L13.3 26.3L32.7 35L53 30.7V39.3H3Z" fill="#fef3e3"/></svg>
      <!-- area discrete -->
      <svg class="border border-[#ddd] bg-white" viewBox="1 1 54 40"><path d="M3 18.7L8 8L17 28L27 16.3V39.3H3Z" fill="#c9d9e9"/><path d="M3 25L8 16L17 33L27 24V39.3H3Z" fill="#fce3c6"/><path d="M3 31L8 27L17 37L27 31V39.3H3Z" fill="#fef3e3"/><path d="M29.3 18.7L34.3 8L43.3 28L53.3 16.3V39.3H29.3Z" fill="#c9d9e9"/><path d="M29.3 25L34.3 16L43.3 33L53.3 24V39.3H29.3Z" fill="#fce3c6"/><path d="M29.3 31L34.3 27L43.3 37L53.3 31V39.3H29.3Z" fill="#fef3e3"/></svg>
      <!-- combo -->
      <svg class="border border-[#ddd] bg-white" viewBox="1 1 54 40"><path d="M3 4H6M3 11H6M3 18H6M3 25H6M3 32H6M51 4H54M51 11H54M51 18H54M51 25H54M51 32H54" stroke="#eee"/><g fill="#c9d9e9"><rect x="10" y="22" width="5" height="17"/><rect x="18" y="17" width="5" height="22"/><rect x="26" y="26.3" width="5" height="12.7"/><rect x="34" y="8" width="5" height="31"/><rect x="42" y="21.3" width="5" height="17.7"/></g><polyline fill="none" stroke="#fbe2c5" stroke-width="1.2" points="11,18.7 20,9.7 29.3,22 37.7,13.7 46,22"/></svg>
      <!-- scatter -->
      <svg class="border border-[#ddd] bg-white" viewBox="1 1 54 40" fill="none"><g stroke="#fddcb5" stroke-width="1.1"><circle cx="22" cy="12" r="3.5"/><circle cx="14" cy="22" r="3.5"/><circle cx="25" cy="26" r="3.5"/><circle cx="8" cy="34" r="3.5"/><circle cx="43" cy="14" r="3.5"/></g><path d="M35.3 4V12M31.3 8H39.3M31.3 14.7V22.7M27.3 18.7H35.3M17.7 27.3V35.3M13.7 31.3H21.7M35.3 26.7V34.7M31.3 30.7H39.3M46.7 20.7V28.7M42.7 24.7H50.7" stroke="#c5e3d6" stroke-width="1.1"/></svg>
      <!-- histogram -->
      <svg class="border border-[#ddd] bg-white" viewBox="1 1 54 40" fill="#c6e3d5"><rect x="6" y="35.3" width="4" height="2.7"/><rect x="11" y="30" width="4" height="8"/><rect x="16" y="21" width="4" height="17"/><rect x="21" y="11" width="4" height="27"/><rect x="26" y="7" width="4" height="31"/><rect x="31" y="11" width="4" height="27"/><rect x="36" y="21" width="4" height="17"/><rect x="41" y="30" width="4" height="8"/><rect x="46" y="35.3" width="4" height="2.7"/></svg>
      <!-- box plot -->
      <svg class="border border-[#ddd] bg-white" viewBox="1 1 54 40"><rect x="7" y="18" width="7" height="4" fill="#9ddcb5"/><rect x="7" y="22" width="7" height="8" fill="#57ad88"/><rect x="19" y="13" width="7" height="9" fill="#9ddcb5"/><rect x="19" y="22" width="7" height="5" fill="#57ad88"/><rect x="31" y="16" width="7" height="8" fill="#9ddcb5"/><rect x="31" y="24" width="7" height="8" fill="#57ad88"/><rect x="43" y="11" width="7" height="12" fill="#9ddcb5"/><rect x="43" y="23" width="7" height="5" fill="#57ad88"/><path d="M10.5 10.3V33M8.5 10.3H12.5M8.5 33H12.5M22.3 8V35M20.3 8H24.3M20.3 35H24.3M34.3 7.3V36.3M32.3 7.3H36.3M32.3 36.3H36.3M46.3 5.3V37.3M44.3 5.3H48.3M44.3 37.3H48.3" stroke="#333" stroke-width=".9" fill="none"/></svg>
      <!-- gantt -->
      <svg class="border border-[#ddd] bg-white" viewBox="1 1 54 40"><g fill="#c6e3d5"><rect x="4" y="4" width="9" height="8"/><rect x="11" y="16" width="3" height="8"/><rect x="18" y="16" width="4" height="8"/><rect x="4" y="29" width="2" height="8"/><rect x="33" y="29" width="7" height="8"/></g><g fill="#fde3c6"><rect x="20" y="4" width="4" height="8"/><rect x="25" y="4" width="4" height="8"/><rect x="36" y="4" width="2" height="8"/><rect x="42" y="4" width="8" height="8"/><rect x="44" y="16" width="8" height="8"/><rect x="9" y="29" width="8" height="8"/><rect x="19" y="29" width="2" height="8"/><rect x="46" y="29" width="4" height="8"/></g><g fill="#e1f4e8"><rect x="4" y="16" width="6" height="8"/><rect x="25" y="16" width="14" height="8"/><rect x="23" y="29" width="4" height="8"/></g></svg>
      <!-- bullet -->
      <svg class="border border-[#ddd] bg-white" viewBox="1 1 54 40"><g fill="#f4f4f4"><rect x="5" y="5" width="41" height="8"/><rect x="5" y="17" width="46" height="8"/><rect x="5" y="29" width="44" height="8"/></g><g fill="#c6e3d5"><rect x="5" y="7" width="25" height="4"/><rect x="5" y="19" width="40" height="4"/><rect x="5" y="31" width="21" height="4"/></g><path d="M33.3 5V13M40.3 17V25M46.3 29V37" stroke="#bbb"/></svg>
      <!-- bubbles -->
      <svg class="border border-[#ddd] bg-white" viewBox="1 1 54 40"><circle cx="15.3" cy="28" r="9.3" fill="#9ddcb5"/><circle cx="30.7" cy="22" r="5.7" fill="#fdb874"/><circle cx="45.3" cy="16.7" r="6.7" fill="#fdb874"/><circle cx="26" cy="11" r="5" fill="#57ad88"/><circle cx="16.3" cy="13.7" r="3.3" fill="#57ad88"/><circle cx="35.3" cy="12" r="3" fill="#9ddcb5"/><circle cx="40" cy="27" r="3.7" fill="#f7962f"/><circle cx="30" cy="33" r="4" fill="#57ad88"/></svg>
    </div>
    <p class="mt-[20px] ml-[2px] w-[184px] leading-[16px] tracking-[-0.3px] text-[#222]">水平棒グラフの場合、次を試してください。</p>
    <div class="flex items-center ml-[2px] mt-[7px] h-[20px] text-[#222]">0 個以上の<span class="ml-[3px] flex items-center w-[83px] h-[20px] pl-[10px] rounded-full bg-[#4996b2] text-[11px] tracking-[-0.5px] text-white whitespace-nowrap">ディメンション</span></div>
    <div class="flex items-center ml-[2px] mt-[8px] h-[20px] text-[#222]">1 個以上の<span class="ml-[3px] flex items-center w-[60px] h-[20px] pl-[10px] rounded-full bg-[#00b180] text-[11px] tracking-[-0.5px] text-white whitespace-nowrap">メジャー</span></div>
  </div>
</div>
</body>
</html>
